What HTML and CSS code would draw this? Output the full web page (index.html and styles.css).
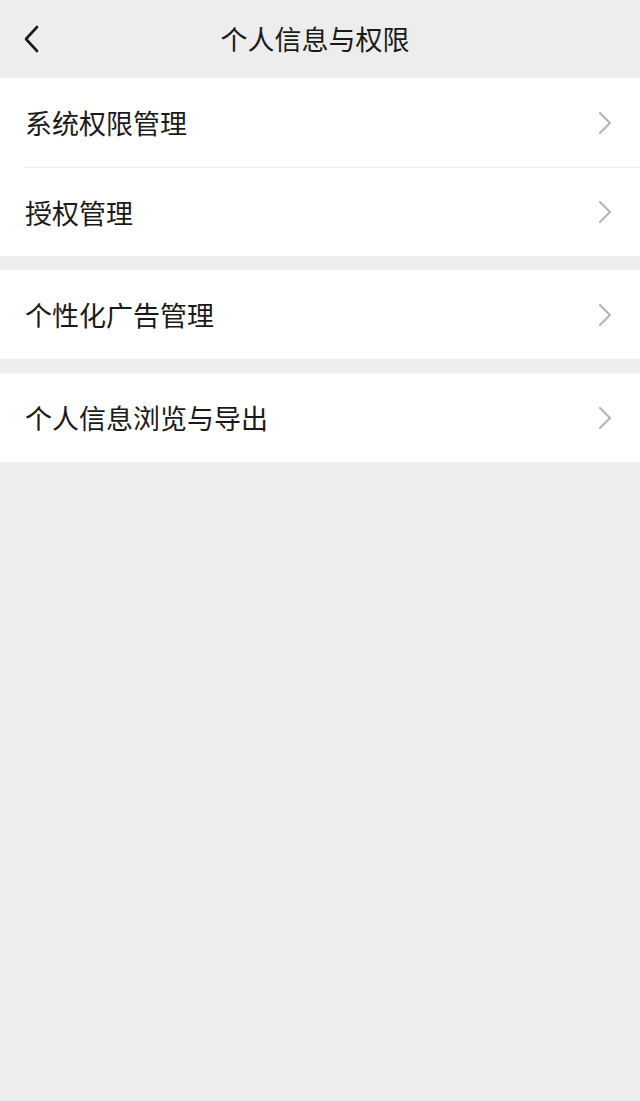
FILE: index.html
```html
<!doctype html>
<html lang="zh-CN">

<head>
    <meta charset="UTF-8" />
    <meta name="viewport" content="width=device-width, initial-scale=1.0" />
    <title>个人信息与权限</title>
    <link rel="stylesheet" href="styles.css">
</head>

<body>
    <div class="header">
        <svg class="back" width="16" height="28" viewBox="0 0 16 28">
            <path d="M14 2 L3 14 L14 26" fill="none" stroke="#1a1a1a" stroke-width="2.6" stroke-linecap="round" stroke-linejoin="round" />
        </svg>
        <h1>个人信息与权限</h1>
    </div>

    <div class="group">
        <div class="row">
            <span class="label">系统权限管理</span>
            <svg class="arrow" width="14" height="24" viewBox="0 0 14 24">
                <path d="M2 2 L12 12 L2 22" fill="none" stroke="#b5b5b5" stroke-width="2.2" stroke-linecap="round" stroke-linejoin="round" />
            </svg>
        </div>
        <div class="row">
            <span class="label">授权管理</span>
            <svg class="arrow" width="14" height="24" viewBox="0 0 14 24">
                <path d="M2 2 L12 12 L2 22" fill="none" stroke="#b5b5b5" stroke-width="2.2" stroke-linecap="round" stroke-linejoin="round" />
            </svg>
        </div>
    </div>

    <div class="group">
        <div class="row">
            <span class="label">个性化广告管理</span>
            <svg class="arrow" width="14" height="24" viewBox="0 0 14 24">
                <path d="M2 2 L12 12 L2 22" fill="none" stroke="#b5b5b5" stroke-width="2.2" stroke-linecap="round" stroke-linejoin="round" />
            </svg>
        </div>
    </div>

    <div class="group">
        <div class="row">
            <span class="label">个人信息浏览与导出</span>
            <svg class="arrow" width="14" height="24" viewBox="0 0 14 24">
                <path d="M2 2 L12 12 L2 22" fill="none" stroke="#b5b5b5" stroke-width="2.2" stroke-linecap="round" stroke-linejoin="round" />
            </svg>
        </div>
    </div>
</body>

</html>
```

FILE: styles.css
```css
body {
    margin: 0;
    background: #ededed;
    font-family: "Noto Sans CJK SC", "Noto Sans", sans-serif;
    color: #1a1a1a;
}

.header {
    height: 78px;
    display: flex;
    align-items: center;
    justify-content: center;
    position: relative;
}

.header h1 {
    margin: 0 10px 2px 0;
    font-size: 27px;
    font-weight: 400;
    line-height: 1;
}

.back {
    position: absolute;
    left: 23px;
    top: 25px;
}

.group {
    background: white;
    margin-bottom: 14px;
}

.row {
    height: 89px;
    display: flex;
    align-items: center;
    justify-content: space-between;
    margin-left: 25px;
    padding-right: 28px;
    box-sizing: border-box;
}

.row + .row {
    border-top: 1px solid #ececec;
}

.label {
    font-size: 27px;
    line-height: 1;
}

.arrow {
    display: block;
}
```
